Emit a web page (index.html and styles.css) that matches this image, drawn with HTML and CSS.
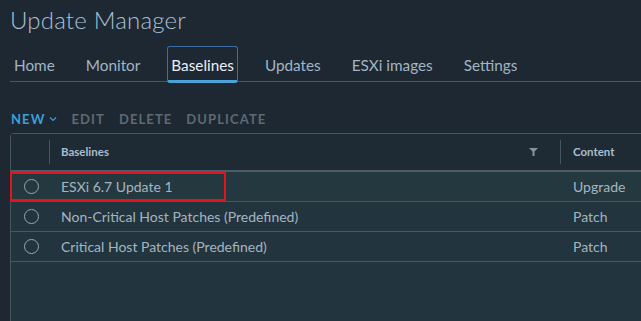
FILE: index.html
```html
<!DOCTYPE html>
<html lang="en">
<head>
<meta charset="utf-8">
<title>Update Manager</title>
<link rel="stylesheet" href="styles.css">
</head>
<body>
<div class="app">
  <h1 class="title">Update Manager</h1>
  <nav class="tabs">
    <a class="tab">Home</a>
    <a class="tab">Monitor</a>
    <a class="tab active">Baselines</a>
    <a class="tab">Updates</a>
    <a class="tab">ESXi images</a>
    <a class="tab">Settings</a>
  </nav>
  <div class="toolbar">
    <span class="action primary">NEW<svg class="chev" width="8" height="6" viewBox="0 0 8 6"><path d="M1 1.5 L4 4.5 L7 1.5" fill="none" stroke="currentColor" stroke-width="1.2"/></svg></span>
    <span class="action">EDIT</span>
    <span class="action">DELETE</span>
    <span class="action">DUPLICATE</span>
  </div>
  <div class="grid">
    <div class="row head">
      <div class="cell sel"></div>
      <div class="cell name"><span class="sep"></span>Baselines
        <svg class="filter" width="9" height="8" viewBox="0 0 9 8"><path d="M0 0 H9 L5.5 3.5 V8 H3.5 V3.5 Z" fill="#8593a0"/></svg>
      </div>
      <div class="cell content"><span class="sep"></span>Content</div>
    </div>
    <div class="row first">
      <div class="cell sel"><span class="radio"></span></div>
      <div class="cell name">ESXi 6.7 Update 1</div>
      <div class="cell content">Upgrade</div>
      <div class="mark"></div>
    </div>
    <div class="row">
      <div class="cell sel"><span class="radio"></span></div>
      <div class="cell name">Non-Critical Host Patches (Predefined)</div>
      <div class="cell content">Patch</div>
    </div>
    <div class="row">
      <div class="cell sel"><span class="radio"></span></div>
      <div class="cell name">Critical Host Patches (Predefined)</div>
      <div class="cell content">Patch</div>
    </div>
  </div>
</div>
</body>
</html>
```
FILE: styles.css
```css
html, body {
  margin: 0;
  height: 100%;
  overflow: hidden;
}
body {
  background: #1d2832;
  font-family: Lato, "Open Sans", sans-serif;
  color: #a9b9c6;
}
.app {
  display: flex;
  flex-direction: column;
  height: 100%;
}
.title {
  margin: 0;
  padding: 4px 0 0 10px;
  height: 42px;
  box-sizing: border-box;
  font-size: 24px;
  line-height: 32px;
  font-weight: 300;
  color: #a9c0d6;
  letter-spacing: 0.2px;
}
.tabs {
  display: flex;
  align-items: flex-end;
  gap: 23px;
  margin: 4px 0 0 10px;
  height: 35px;
  border-bottom: 1px solid #475662;
}
.tab {
  height: 37px;
  margin-bottom: -2px;
  padding: 3px 3px 0;
  box-sizing: border-box;
  display: flex;
  align-items: center;
  font-size: 15.3px;
  color: #a3b5c4;
  border: 1px solid transparent;
  border-bottom-width: 3px;
  border-radius: 3px;
}
.tab.active {
  color: #e9f0f6;
  border-color: #3a6ea5;
  border-bottom-color: #4aa3d8;
}
.toolbar {
  display: flex;
  align-items: center;
  gap: 14px;
  margin: 24px 0 0 11px;
  height: 26px;
}
.action {
  display: flex;
  align-items: center;
  font-size: 13px;
  font-weight: 700;
  letter-spacing: 1.1px;
  color: #5d6a74;
}
.action.primary {
  color: #3b9fd8;
}
.chev {
  margin-left: 4px;
}
.grid {
  flex: 1;
  margin: 1px 0 0 10px;
  background: #22343d;
  border-left: 1px solid #46565f;
  border-top: 1px solid #46565f;
  border-top-left-radius: 4px;
}
.row {
  display: flex;
  height: 30px;
  border-bottom: 1px solid #45575f;
  box-sizing: border-box;
  position: relative;
  font-size: 14px;
  color: #a4b5c1;
}
.row.head {
  height: 38px;
  background: #1e2b34;
  border-bottom: 2px solid #4d5d67;
  padding-bottom: 1px;
  font-size: 11.5px;
  font-weight: 700;
  color: #a9bdcc;
}
.row.first {
  background: #243840;
}
.cell {
  display: flex;
  align-items: center;
  box-sizing: border-box;
  position: relative;
}
.sel {
  width: 38px;
  justify-content: center;
  padding-left: 2px;
}
.name {
  width: 511px;
  padding-left: 12px;
}
.content {
  flex: 1;
  padding-left: 13px;
}
.sep {
  position: absolute;
  left: 0;
  top: 6px;
  height: 24px;
  width: 1px;
  background: #46555f;
}
.filter {
  margin-left: auto;
  margin-right: 22px;
}
.radio {
  width: 15px;
  height: 15px;
  border: 1px solid #9aa6ae;
  border-radius: 50%;
  box-sizing: border-box;
}
.mark {
  position: absolute;
  left: -1px;
  top: 0;
  width: 216px;
  height: 29px;
  border: 2px solid #e3141b;
  box-sizing: border-box;
}
```
